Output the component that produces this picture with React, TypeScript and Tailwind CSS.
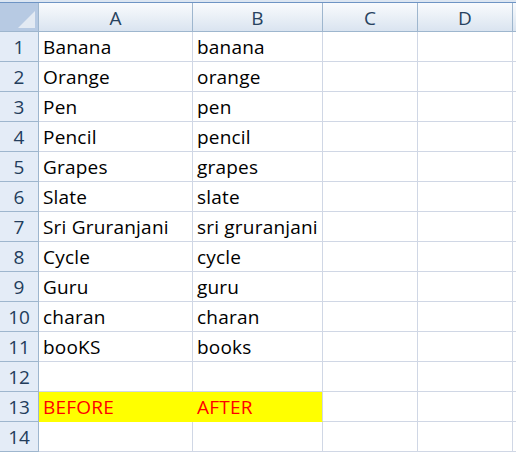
import React from "react";

const cols = ["A", "B", "C", "D"];

const rows: [string, string][] = [
  ["Banana", "banana"],
  ["Orange", "orange"],
  ["Pen", "pen"],
  ["Pencil", "pencil"],
  ["Grapes", "grapes"],
  ["Slate", "slate"],
  ["Sri Gruranjani", "sri gruranjani"],
  ["Cycle", "cycle"],
  ["Guru", "guru"],
  ["charan", "charan"],
  ["booKS", "books"],
  ["", ""],
  ["BEFORE", "AFTER"],
  ["", ""],
];

const widths = ["w-[154px]", "w-[130px]", "w-[95px]", "w-[95px]"];

export default function App() {
  return (
    <div
      className="w-[516px] h-[453px] bg-white overflow-hidden"
      style={{ fontFamily: "'Open Sans', 'Liberation Sans', sans-serif" }}
    >
      {/* top strip */}
      <div className="h-[2px] bg-[#dce6f2]" />
      <div className="h-px bg-[#6e94c4]" />

      {/* column headers */}
      <div className="flex h-[29px]">
        <div className="w-[39px] shrink-0 border-r border-b border-[#9eb6ce] bg-[#b7cae3] relative overflow-hidden">
          <svg className="absolute inset-0" width="38" height="28">
            <polygon points="35,8 35,25 18,25" fill="#e3eaf3" />
          </svg>
        </div>
        {cols.map((c, i) => (
          <div
            key={c}
            className={`${widths[i]} shrink-0 border-r border-b border-[#9eb6ce] bg-gradient-to-b from-[#f9fbfd] to-[#dae4f0] flex items-center justify-center pt-[2px] text-[19px] text-[#27425f]`}
          >
            {c}
          </div>
        ))}
        <div className="flex-1 border-b border-[#9eb6ce] bg-gradient-to-b from-[#f9fbfd] to-[#dae4f0]" />
      </div>

      {/* body */}
      {rows.map(([a, b], r) => {
        const hi = r === 12;
        return (
          <div key={r} className="flex h-[30px]">
            <div className="w-[39px] shrink-0 border-r border-b border-[#9eb6ce] bg-[#e4ecf7] flex items-center justify-center pt-[2px] text-[19px] text-[#233d5c]">
              {r + 1}
            </div>
            <div
              className={`w-[154px] shrink-0 border-b flex items-center pl-[4px] pt-[2px] text-[19px] tracking-[0.2px] whitespace-nowrap ${
                hi ? "bg-[#ffff00] border-[#ffff00] text-[#ff0000]" : "border-r border-[#d0d7e5] text-black"
              }`}
            >
              {a}
            </div>
            <div
              className={`w-[130px] shrink-0 border-r border-b flex items-center pl-[4px] pt-[2px] text-[19px] tracking-[0.2px] whitespace-nowrap ${
                hi ? "bg-[#ffff00] border-b-[#ffff00] border-r-[#d0d7e5] text-[#ff0000]" : "border-[#d0d7e5] text-black"
              }`}
            >
              {b}
            </div>
            <div className="w-[95px] shrink-0 border-r border-b border-[#d0d7e5]" />
            <div className="w-[95px] shrink-0 border-r border-b border-[#d0d7e5]" />
            <div className="flex-1 border-b border-[#d0d7e5]" />
          </div>
        );
      })}
    </div>
  );
}
